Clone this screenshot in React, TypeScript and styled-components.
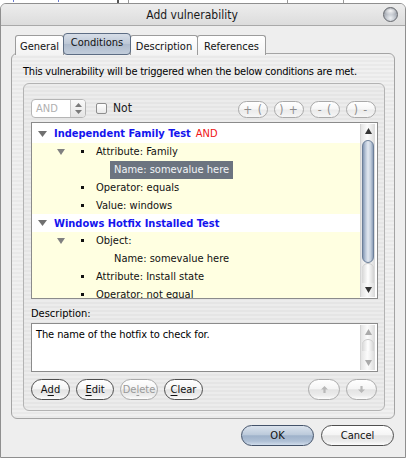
import React from 'react';
import styled, { createGlobalStyle, css } from 'styled-components';

const Global = createGlobalStyle`
  html, body { margin: 0; padding: 0; background: #ffffff; }
  body {
    font-family: "DejaVu Sans Condensed", "DejaVu Sans", "Liberation Sans", sans-serif;
    font-stretch: semi-condensed;
    font-size: 11px;
    color: #000;
  }
  * { box-sizing: border-box; }
`;

const Page = styled.div`
  width: 406px;
  height: 459px;
  overflow: hidden;
  background: #ffffff;
`;

const BehindStrip = styled.div`
  height: 3px;
  background:
    linear-gradient(#555, #555) 117px 0 / 2px 3px no-repeat,
    linear-gradient(#999, #999) 128px 0 / 1px 3px no-repeat,
    linear-gradient(#999, #999) 287px 0 / 1px 3px no-repeat,
    linear-gradient(#999, #999) 343px 0 / 1px 3px no-repeat,
    linear-gradient(#6a7ad0, #6a7ad0) 13px 0 / 1px 2px no-repeat,
    linear-gradient(#6a7ad0, #6a7ad0) 58px 0 / 1px 2px no-repeat,
    #ffffff;
`;

const Window = styled.div`
  height: 455px;
  width: 406px;
  border: 1px solid #8f8f8f;
  border-radius: 6px 6px 0 0;
  background: #eeeeee;
  display: flex;
  flex-direction: column;
  overflow: hidden;
`;

const TitleBar = styled.div`
  height: 22px;
  flex: none;
  display: flex;
  align-items: center;
  background: linear-gradient(#ededed, #dcdcdc);
  border-bottom: 1px solid #a9a9a9;
`;

const TitleText = styled.div`
  flex: 1;
  text-align: center;
  font-size: 12px;
  color: #1a1a1a;
  padding-top: 1px;
`;

const CloseOrb = styled.div`
  margin-right: 7px;
  width: 15px;
  height: 15px;
  border-radius: 50%;
  border: 1px solid #66696e;
  background:
    radial-gradient(ellipse 55% 32% at 50% 22%, rgba(255,255,255,0.95), rgba(255,255,255,0) 100%),
    radial-gradient(circle at 50% 78%, #eef1f4 0%, #b7bcc4 45%, #7b8089 100%);
`;

const Body = styled.div`
  flex: 1;
  display: flex;
  flex-direction: column;
  padding: 7px 10px 0 10px;
`;

const TabBar = styled.div`
  display: flex;
  align-items: flex-end;
  padding-left: 4px;
  height: 22px;
  position: relative;
  z-index: 1;
`;

const Tab = styled.div<{ $active?: boolean; $w: number }>`
  width: ${p => p.$w}px;
  height: 20px;
  display: flex;
  align-items: center;
  justify-content: center;
  font-size: 11px;
  color: #111;
  border: 1px solid #9c9c9c;
  border-bottom: none;
  margin-right: -1px;
  border-radius: 3px 3px 0 0;
  background: linear-gradient(#ffffff, #f3f3f3);
  padding-top: 1px;
  ${p => p.$active && css`
    height: 22px;
    border: 1px solid #5d6d84;
    border-radius: 4px;
    background: linear-gradient(#d7dee8 0%, #bcc7d6 50%, #aebbcd 52%, #c2cddb 100%);
    padding-top: 0;
    padding-bottom: 4px;
    z-index: 2;
  `}
`;

const stripes = css`
  background: repeating-linear-gradient(#f0f0f0 0px, #f0f0f0 2px, #e9e9e9 2px, #e9e9e9 4px);
`;

const Pane = styled.div`
  height: 366px;
  margin-top: -2px;
  border: 1px solid #a4a4a4;
  border-radius: 6px;
  ${stripes};
  display: flex;
  flex-direction: column;
  padding: 11px 9px 7px 11px;
`;

const Intro = styled.div`
  font-size: 11px;
  line-height: 14px;
  height: 14px;
  margin-bottom: 4px;
  white-space: nowrap;
  letter-spacing: -0.22px;
`;

const Group = styled.div`
  flex: 1;
  border: 1px solid #b3b3b3;
  border-radius: 6px;
  background: repeating-linear-gradient(#ececec 0px, #ececec 2px, #e5e5e5 2px, #e5e5e5 4px);
  display: flex;
  flex-direction: column;
  padding: 14px 5px 10px 7px;
`;

const Toolbar = styled.div`
  display: flex;
  align-items: center;
  height: 20px;
  margin-bottom: 4px;
`;

const Combo = styled.div`
  display: flex;
  width: 55px;
  height: 19px;
  border: 1px solid #b5b5b5;
  border-radius: 4px;
  overflow: hidden;
  background: #fff;
`;

const ComboField = styled.div`
  flex: 1;
  display: flex;
  align-items: center;
  padding-left: 4px;
  font-size: 11px;
  color: #b0b0b0;
  border-right: 1px solid #c8c8c8;
`;

const ComboStepper = styled.div`
  width: 14px;
  display: flex;
  align-items: center;
  justify-content: center;
  background: linear-gradient(#fafafa, #e4e4e4);
`;

const CheckBox = styled.div`
  width: 11px;
  height: 11px;
  margin-left: 10px;
  margin-right: 6px;
  border: 1px solid #8e8e8e;
  border-radius: 2px;
  background: linear-gradient(#ffffff, #e9e9e9);
`;

const CheckLabel = styled.div`
  font-size: 12px;
  color: #1a1a1a;
`;

const Spacer = styled.div`
  flex: 1;
`;

const ParenGroup = styled.div`
  display: flex;
  gap: 6px;
  margin-right: 3px;
  padding-top: 3px;
`;

const ParenButton = styled.div`
  width: 30px;
  height: 17px;
  border: 1px solid #a9a9a9;
  border-radius: 9px;
  background: linear-gradient(#ffffff 0%, #f7f7f7 45%, #ebebeb 55%, #f6f6f6 100%);
  color: #8d8d8d;
  font-size: 12px;
  display: flex;
  align-items: center;
  justify-content: center;
  letter-spacing: 1px;
  white-space: pre;
`;

const TreeBox = styled.div`
  height: 177px;
  margin-right: 1px;
  border: 1px solid #8b8b8b;
  background: #ffffff;
  display: flex;
  overflow: hidden;
`;

const TreeRows = styled.div`
  flex: 1;
  padding-top: 2px;
  overflow: hidden;
`;

const Row = styled.div<{ $header?: boolean; $pad: number }>`
  height: 17.85px;
  display: flex;
  align-items: center;
  padding-left: ${p => p.$pad}px;
  background: ${p => (p.$header ? '#ffffff' : '#ffffe1')};
  font-size: 11px;
  white-space: nowrap;
`;

const ToggleSlot = styled.div<{ $w: number }>`
  width: ${p => p.$w}px;
  flex: none;
  display: flex;
  align-items: center;
`;

const Bullet = styled.div`
  width: 3px;
  height: 3px;
  background: #111;
  margin-right: 12px;
  flex: none;
`;

const GroupTitle = styled.span`
  color: #1414ee;
  font-weight: bold;
`;

const Joiner = styled.span`
  color: #f01414;
  margin-left: 5px;
`;

const ItemText = styled.span<{ $selected?: boolean }>`
  padding: 0 ${p => (p.$selected !== undefined ? 4 : 0)}px;
  height: 18px;
  display: flex;
  align-items: center;
  color: #111;
  ${p => p.$selected && css`
    background: #6c7480;
    color: #f2f4f7;
  `}
`;

const ScrollTrack = styled.div<{ $w: number }>`
  width: ${p => p.$w}px;
  flex: none;
  margin: 1px 2px 1px 0;
  display: flex;
  flex-direction: column;
  border-left: 1px solid #d4d4d4;
  background: linear-gradient(90deg, #e4e4e4, #fbfbfb 45%, #f4f4f4 60%, #dadada);
`;

const ArrowCell = styled.div`
  height: 14px;
  flex: none;
  display: flex;
  align-items: center;
  justify-content: center;
`;

const Thumb = styled.div<{ $h: number }>`
  height: ${p => p.$h}px;
  flex: none;
  margin: 0 1px;
  border: 1px solid #6c7f99;
  border-radius: 7px;
  background: linear-gradient(90deg, #8497b3 0%, #b9c6d8 25%, #e3e9f1 50%, #c4cfdd 75%, #8d9fb9 100%);
`;

const Cup = styled.div<{ $h?: number }>`
  ${p => (p.$h ? css`height: ${p.$h}px; flex: none;` : css`flex: 1;`)}
  margin: 0 1px;
  border-radius: 7px 7px 0 0;
  border-top: 1px solid #c6c6c6;
  background: linear-gradient(90deg, #d6d6d6, #ffffff 50%, #d2d2d2);
`;

const Gap = styled.div<{ $h?: number }>`
  ${p => (p.$h ? css`height: ${p.$h}px; flex: none;` : css`flex: 1;`)}
`;

const FieldLabel = styled.div`
  font-size: 11px;
  height: 14px;
  line-height: 14px;
  margin-top: 8px;
  margin-bottom: 2px;
`;

const TextArea = styled.div`
  height: 49px;
  margin-right: 1px;
  border: 1px solid #8b8b8b;
  background: #fff;
  display: flex;
`;

const TextAreaText = styled.div`
  flex: 1;
  font-size: 11px;
  padding: 4px 4px;
  letter-spacing: -0.1px;
`;

const ButtonRow = styled.div`
  display: flex;
  align-items: center;
  margin-top: 7px;
  gap: 6px;
`;

const Pill = styled.div<{ $w: number; $disabled?: boolean; $primary?: boolean }>`
  width: ${p => p.$w}px;
  height: 21px;
  flex: none;
  border-radius: 11px;
  border: 1px solid #4f4f4f;
  display: flex;
  align-items: center;
  justify-content: center;
  font-size: 11px;
  color: #111;
  background: linear-gradient(#ffffff 0%, #f5f5f5 45%, #e3e3e3 52%, #ececec 80%, #fdfdfd 100%);
  ${p => p.$disabled && css`
    border-color: #aaaaaa;
    color: #9a9a9a;
  `}
  ${p => p.$primary && css`
    border-color: #44536a;
    background: linear-gradient(#dbe3ed 0%, #bccadb 45%, #9fb2ca 52%, #afc0d5 80%, #d0dceb 100%);
  `}
`;

const Key = styled.span`
  text-decoration: underline;
  text-underline-offset: 2px;
`;

const Footer = styled.div`
  display: flex;
  justify-content: flex-end;
  gap: 7px;
  margin-top: 6px;
  padding-right: 1px;
`;

const Tri = ({ dir, color = '#666', w = 7, h = 5 }: { dir: 'up' | 'down'; color?: string; w?: number; h?: number }) => (
  <svg width={w} height={h} viewBox={`0 0 ${w} ${h}`}>
    <polygon points={dir === 'down' ? `0,0 ${w},0 ${w / 2},${h}` : `0,${h} ${w},${h} ${w / 2},0`} fill={color} />
  </svg>
);

const ArrowIcon = ({ dir }: { dir: 'up' | 'down' }) => (
  <svg width="9" height="9" viewBox="0 0 9 9">
    {dir === 'up' ? (
      <path d="M4.5 1 L8 4.5 H5.6 V8 H3.4 V4.5 H1 Z" fill="#b8b8b8" />
    ) : (
      <path d="M4.5 8 L8 4.5 H5.6 V1 H3.4 V4.5 H1 Z" fill="#b8b8b8" />
    )}
  </svg>
);

type Item =
  | { kind: 'header'; title: string; joiner?: string }
  | { kind: 'item'; text: string; toggle?: boolean }
  | { kind: 'sub'; text: string; selected?: boolean };

const items: Item[] = [
  { kind: 'header', title: 'Independent Family Test', joiner: 'AND' },
  { kind: 'item', text: 'Attribute: Family', toggle: true },
  { kind: 'sub', text: 'Name: somevalue here', selected: true },
  { kind: 'item', text: 'Operator: equals' },
  { kind: 'item', text: 'Value: windows' },
  { kind: 'header', title: 'Windows Hotfix Installed Test' },
  { kind: 'item', text: 'Object:', toggle: true },
  { kind: 'sub', text: 'Name: somevalue here', selected: false },
  { kind: 'item', text: 'Attribute: Install state' },
  { kind: 'item', text: 'Operator: not equal' },
];

const TreeRow = ({ item }: { item: Item }) => {
  if (item.kind === 'header') {
    return (
      <Row $header $pad={6}>
        <ToggleSlot $w={16}>
          <Tri dir="down" w={9} h={6} color="#707070" />
        </ToggleSlot>
        <GroupTitle>{item.title}</GroupTitle>
        {item.joiner && <Joiner>{item.joiner}</Joiner>}
      </Row>
    );
  }
  if (item.kind === 'item') {
    return (
      <Row $pad={25}>
        <ToggleSlot $w={24}>{item.toggle && <Tri dir="down" w={8} h={6} color="#808080" />}</ToggleSlot>
        <Bullet />
        <ItemText>{item.text}</ItemText>
      </Row>
    );
  }
  return (
    <Row $pad={78}>
      <ItemText $selected={item.selected}>{item.text}</ItemText>
    </Row>
  );
};

export default function App() {
  return (
    <Page>
      <Global />
      <BehindStrip />
      <Window>
        <TitleBar>
          <TitleText>Add vulnerability</TitleText>
          <CloseOrb />
        </TitleBar>
        <Body>
          <TabBar>
            <Tab $w={49}>General</Tab>
            <Tab $w={68} $active>Conditions</Tab>
            <Tab $w={68}>Description</Tab>
            <Tab $w={69}>References</Tab>
          </TabBar>
          <Pane>
            <Intro>This vulnerability will be triggered when the below conditions are met.</Intro>
            <Group>
              <Toolbar>
                <Combo>
                  <ComboField>AND</ComboField>
                  <ComboStepper>
                    <svg width="7" height="11" viewBox="0 0 7 11">
                      <polygon points="0,4 7,4 3.5,0" fill="#7a7a7a" />
                      <polygon points="0,7 7,7 3.5,11" fill="#7a7a7a" />
                    </svg>
                  </ComboStepper>
                </Combo>
                <CheckBox />
                <CheckLabel>Not</CheckLabel>
                <Spacer />
                <ParenGroup>
                  <ParenButton>{'+ ('}</ParenButton>
                  <ParenButton>{') +'}</ParenButton>
                  <ParenButton>{'- ('}</ParenButton>
                  <ParenButton>{') -'}</ParenButton>
                </ParenGroup>
              </Toolbar>
              <TreeBox>
                <TreeRows>
                  {items.map((it, i) => (
                    <TreeRow key={i} item={it} />
                  ))}
                </TreeRows>
                <ScrollTrack $w={15}>
                  <ArrowCell>
                    <Tri dir="up" w={7} h={6} color="#333" />
                  </ArrowCell>
                  <Gap $h={2} />
                  <Thumb $h={123} />
                  <Cup />
                  <ArrowCell>
                    <Tri dir="down" w={7} h={6} color="#333" />
                  </ArrowCell>
                </ScrollTrack>
              </TreeBox>
              <FieldLabel>Description:</FieldLabel>
              <TextArea>
                <TextAreaText>The name of the hotfix to check for.</TextAreaText>
                <ScrollTrack $w={15}>
                  <ArrowCell>
                    <Tri dir="up" w={7} h={6} color="#aaa" />
                  </ArrowCell>
                  <Cup $h={12} />
                  <Gap />
                  <ArrowCell>
                    <Tri dir="down" w={7} h={6} color="#aaa" />
                  </ArrowCell>
                </ScrollTrack>
              </TextArea>
              <ButtonRow>
                <Pill $w={39}>A<Key>d</Key>d</Pill>
                <Pill $w={38}><Key>E</Key>dit</Pill>
                <Pill $w={38} $disabled>De<Key>l</Key>ete</Pill>
                <Pill $w={39}><Key>C</Key>lear</Pill>
                <Spacer />
                <Pill $w={32} $disabled><ArrowIcon dir="up" /></Pill>
                <Pill $w={31} $disabled style={{ marginRight: 2 }}><ArrowIcon dir="down" /></Pill>
              </ButtonRow>
            </Group>
          </Pane>
          <Footer>
            <Pill $w={73} $primary>OK</Pill>
            <Pill $w={73}>Cancel</Pill>
          </Footer>
        </Body>
      </Window>
    </Page>
  );
}
